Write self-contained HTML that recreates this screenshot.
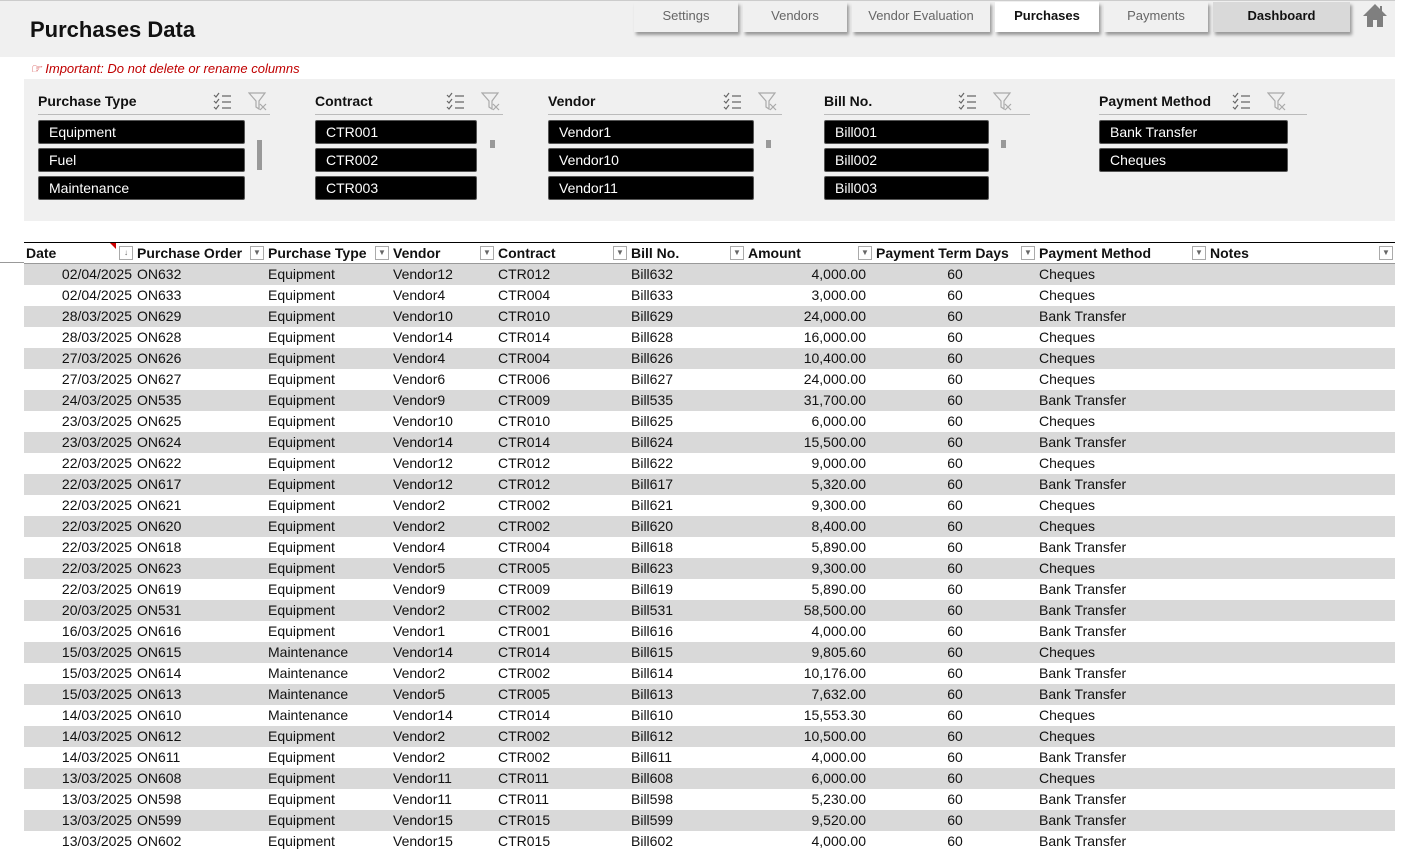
<!DOCTYPE html>
<html><head><meta charset="utf-8"><style>
*{margin:0;padding:0;box-sizing:border-box}
body{width:1412px;height:853px;overflow:hidden;background:#fff;font-family:"Liberation Sans",sans-serif;position:relative}
.top{position:absolute;left:0;top:0;width:1395px;height:57px;background:#f0f0f0;border-top:1px solid #ccc}
.title{position:absolute;left:30px;top:17px;font-size:22px;font-weight:bold;color:#111}
.tab{position:absolute;top:2px;height:30px;background:#f0f0f0;font-size:13px;color:#666;text-align:center;line-height:28px;box-shadow:2px 3px 3px #999}
.imp{position:absolute;left:30px;top:61px;font-size:13px;font-style:italic;color:#c00000}
.panel{position:absolute;left:24px;top:79px;width:1371px;height:142px;background:#f0f0f0}
.sl{position:absolute;top:0}
.sl .h{position:absolute;left:0;top:14px;font-size:14px;font-weight:bold;color:#111;white-space:nowrap}
.sl .ln{position:absolute;left:0;top:35px;height:1px;background:#bbb}
.btn{position:absolute;left:0;height:24px;background:#000;color:#fff;font-size:14px;line-height:22px;padding-left:10px;border-radius:2px;border:1px solid #555}
.sb{position:absolute;width:5px;background:#999}
table{position:absolute;left:24px;top:242px;border-collapse:collapse;table-layout:fixed;width:1371px;font-size:14px;color:#111}
th{height:21px;text-align:left;font-weight:bold;border-top:1px solid #000;border-bottom:1px solid #999;position:relative;padding-left:2px;white-space:nowrap}
th .dd{position:absolute;right:2px;top:3px;width:14px;height:14px;border:1px solid #aaa;background:#fff;font-size:8px;color:#666;text-align:center;line-height:12px}
td{height:21px;padding:0 3px 0 2px;white-space:nowrap;overflow:hidden}
tr:nth-child(odd) td{background:#d9d9d9}
.r{text-align:right}.c{text-align:center}
td.a{padding-right:8px}
</style></head><body>
<div class="top"></div>
<div class="title">Purchases Data</div>
<div class="tab" style="left:634px;width:104px">Settings</div>
<div class="tab" style="left:743px;width:104px">Vendors</div>
<div class="tab" style="left:852px;width:138px">Vendor Evaluation</div>
<div class="tab" style="left:995px;width:104px;background:#fff;color:#111;font-weight:bold">Purchases</div>
<div class="tab" style="left:1104px;width:104px">Payments</div>
<div class="tab" style="left:1213px;width:137px;background:#d9d9d9;color:#111;font-weight:bold">Dashboard</div>
<svg style="position:absolute;left:1362px;top:3px" width="26" height="25" viewBox="0 0 26 25"><path d="M13 1 L1 13 H5 V24 H11 V17 H15 V24 H21 V13 H25 L20 8 V3 H18 V6 Z" fill="#7f7f7f"/></svg>
<div class="imp">☞ Important: Do not delete or rename columns</div>
<div class="panel">
<div class="sl" style="left:14px"><div class="h">Purchase Type</div><div class="ln" style="width:232px"></div>
<div class="btn" style="top:41px;width:207px">Equipment</div><div class="btn" style="top:69px;width:207px">Fuel</div><div class="btn" style="top:97px;width:207px">Maintenance</div></div>
<div class="sb" style="left:233px;top:61px;height:30px"></div>
<div class="sl" style="left:291px"><div class="h">Contract</div><div class="ln" style="width:188px"></div>
<div class="btn" style="top:41px;width:162px">CTR001</div><div class="btn" style="top:69px;width:162px">CTR002</div><div class="btn" style="top:97px;width:162px">CTR003</div></div>
<div class="sb" style="left:466px;top:61px;height:8px"></div>
<div class="sl" style="left:524px"><div class="h">Vendor</div><div class="ln" style="width:234px"></div>
<div class="btn" style="top:41px;width:206px">Vendor1</div><div class="btn" style="top:69px;width:206px">Vendor10</div><div class="btn" style="top:97px;width:206px">Vendor11</div></div>
<div class="sb" style="left:742px;top:61px;height:8px"></div>
<div class="sl" style="left:800px"><div class="h">Bill No.</div><div class="ln" style="width:206px"></div>
<div class="btn" style="top:41px;width:165px">Bill001</div><div class="btn" style="top:69px;width:165px">Bill002</div><div class="btn" style="top:97px;width:165px">Bill003</div></div>
<div class="sb" style="left:977px;top:61px;height:8px"></div>
<div class="sl" style="left:1075px"><div class="h">Payment Method</div><div class="ln" style="width:208px"></div>
<div class="btn" style="top:41px;width:189px">Bank Transfer</div><div class="btn" style="top:69px;width:189px">Cheques</div></div>
</div>
<svg width="0" height="0" style="position:absolute"><defs>
<g id="ms" stroke="#666" fill="none" stroke-width="1.2"><path d="M1 3 l2 2 l3-4 M1 9 l2 2 l3-4 M1 15 l2 2 l3-4 M9 4 H18 M9 10 H18 M9 16 H18"/></g>
<g id="cf" stroke="#aaa" fill="none" stroke-width="1.2"><path d="M1 1 H17 L11 9 V17 L8 15 V9 Z M12 12 l6 6 M18 12 l-6 6"/></g>
</defs></svg>
<svg style="position:absolute;left:213px;top:92px" width="20" height="20"><use href="#ms"/></svg>
<svg style="position:absolute;left:248px;top:92px" width="20" height="20"><use href="#cf"/></svg>
<svg style="position:absolute;left:446px;top:92px" width="20" height="20"><use href="#ms"/></svg>
<svg style="position:absolute;left:481px;top:92px" width="20" height="20"><use href="#cf"/></svg>
<svg style="position:absolute;left:723px;top:92px" width="20" height="20"><use href="#ms"/></svg>
<svg style="position:absolute;left:758px;top:92px" width="20" height="20"><use href="#cf"/></svg>
<svg style="position:absolute;left:958px;top:92px" width="20" height="20"><use href="#ms"/></svg>
<svg style="position:absolute;left:993px;top:92px" width="20" height="20"><use href="#cf"/></svg>
<svg style="position:absolute;left:1232px;top:92px" width="20" height="20"><use href="#ms"/></svg>
<svg style="position:absolute;left:1267px;top:92px" width="20" height="20"><use href="#cf"/></svg>
<div style="position:absolute;left:0;top:262px;width:24px;height:1px;background:#999"></div>
<table>
<colgroup><col style="width:111px"><col style="width:131px"><col style="width:125px"><col style="width:105px"><col style="width:133px"><col style="width:117px"><col style="width:128px"><col style="width:163px"><col style="width:171px"><col style="width:187px"></colgroup>
<thead><tr>
<th>Date<span class="dd">↓</span><span style="position:absolute;left:86px;top:0;width:0;height:0;border-top:6px solid #c00;border-left:6px solid transparent"></span></th>
<th>Purchase Order<span class="dd">▼</span></th><th>Purchase Type<span class="dd">▼</span></th><th>Vendor<span class="dd">▼</span></th><th>Contract<span class="dd">▼</span></th><th>Bill No.<span class="dd">▼</span></th><th>Amount<span class="dd">▼</span></th><th>Payment Term Days<span class="dd">▼</span></th><th>Payment Method<span class="dd">▼</span></th><th>Notes<span class="dd">▼</span></th>
</tr></thead>
<tbody>
<tr><td class="r">02/04/2025</td><td>ON632</td><td>Equipment</td><td>Vendor12</td><td>CTR012</td><td>Bill632</td><td class="r a">4,000.00</td><td class="c">60</td><td>Cheques</td><td></td></tr>
<tr><td class="r">02/04/2025</td><td>ON633</td><td>Equipment</td><td>Vendor4</td><td>CTR004</td><td>Bill633</td><td class="r a">3,000.00</td><td class="c">60</td><td>Cheques</td><td></td></tr>
<tr><td class="r">28/03/2025</td><td>ON629</td><td>Equipment</td><td>Vendor10</td><td>CTR010</td><td>Bill629</td><td class="r a">24,000.00</td><td class="c">60</td><td>Bank Transfer</td><td></td></tr>
<tr><td class="r">28/03/2025</td><td>ON628</td><td>Equipment</td><td>Vendor14</td><td>CTR014</td><td>Bill628</td><td class="r a">16,000.00</td><td class="c">60</td><td>Cheques</td><td></td></tr>
<tr><td class="r">27/03/2025</td><td>ON626</td><td>Equipment</td><td>Vendor4</td><td>CTR004</td><td>Bill626</td><td class="r a">10,400.00</td><td class="c">60</td><td>Cheques</td><td></td></tr>
<tr><td class="r">27/03/2025</td><td>ON627</td><td>Equipment</td><td>Vendor6</td><td>CTR006</td><td>Bill627</td><td class="r a">24,000.00</td><td class="c">60</td><td>Cheques</td><td></td></tr>
<tr><td class="r">24/03/2025</td><td>ON535</td><td>Equipment</td><td>Vendor9</td><td>CTR009</td><td>Bill535</td><td class="r a">31,700.00</td><td class="c">60</td><td>Bank Transfer</td><td></td></tr>
<tr><td class="r">23/03/2025</td><td>ON625</td><td>Equipment</td><td>Vendor10</td><td>CTR010</td><td>Bill625</td><td class="r a">6,000.00</td><td class="c">60</td><td>Cheques</td><td></td></tr>
<tr><td class="r">23/03/2025</td><td>ON624</td><td>Equipment</td><td>Vendor14</td><td>CTR014</td><td>Bill624</td><td class="r a">15,500.00</td><td class="c">60</td><td>Bank Transfer</td><td></td></tr>
<tr><td class="r">22/03/2025</td><td>ON622</td><td>Equipment</td><td>Vendor12</td><td>CTR012</td><td>Bill622</td><td class="r a">9,000.00</td><td class="c">60</td><td>Cheques</td><td></td></tr>
<tr><td class="r">22/03/2025</td><td>ON617</td><td>Equipment</td><td>Vendor12</td><td>CTR012</td><td>Bill617</td><td class="r a">5,320.00</td><td class="c">60</td><td>Bank Transfer</td><td></td></tr>
<tr><td class="r">22/03/2025</td><td>ON621</td><td>Equipment</td><td>Vendor2</td><td>CTR002</td><td>Bill621</td><td class="r a">9,300.00</td><td class="c">60</td><td>Cheques</td><td></td></tr>
<tr><td class="r">22/03/2025</td><td>ON620</td><td>Equipment</td><td>Vendor2</td><td>CTR002</td><td>Bill620</td><td class="r a">8,400.00</td><td class="c">60</td><td>Cheques</td><td></td></tr>
<tr><td class="r">22/03/2025</td><td>ON618</td><td>Equipment</td><td>Vendor4</td><td>CTR004</td><td>Bill618</td><td class="r a">5,890.00</td><td class="c">60</td><td>Bank Transfer</td><td></td></tr>
<tr><td class="r">22/03/2025</td><td>ON623</td><td>Equipment</td><td>Vendor5</td><td>CTR005</td><td>Bill623</td><td class="r a">9,300.00</td><td class="c">60</td><td>Cheques</td><td></td></tr>
<tr><td class="r">22/03/2025</td><td>ON619</td><td>Equipment</td><td>Vendor9</td><td>CTR009</td><td>Bill619</td><td class="r a">5,890.00</td><td class="c">60</td><td>Bank Transfer</td><td></td></tr>
<tr><td class="r">20/03/2025</td><td>ON531</td><td>Equipment</td><td>Vendor2</td><td>CTR002</td><td>Bill531</td><td class="r a">58,500.00</td><td class="c">60</td><td>Bank Transfer</td><td></td></tr>
<tr><td class="r">16/03/2025</td><td>ON616</td><td>Equipment</td><td>Vendor1</td><td>CTR001</td><td>Bill616</td><td class="r a">4,000.00</td><td class="c">60</td><td>Bank Transfer</td><td></td></tr>
<tr><td class="r">15/03/2025</td><td>ON615</td><td>Maintenance</td><td>Vendor14</td><td>CTR014</td><td>Bill615</td><td class="r a">9,805.60</td><td class="c">60</td><td>Cheques</td><td></td></tr>
<tr><td class="r">15/03/2025</td><td>ON614</td><td>Maintenance</td><td>Vendor2</td><td>CTR002</td><td>Bill614</td><td class="r a">10,176.00</td><td class="c">60</td><td>Bank Transfer</td><td></td></tr>
<tr><td class="r">15/03/2025</td><td>ON613</td><td>Maintenance</td><td>Vendor5</td><td>CTR005</td><td>Bill613</td><td class="r a">7,632.00</td><td class="c">60</td><td>Bank Transfer</td><td></td></tr>
<tr><td class="r">14/03/2025</td><td>ON610</td><td>Maintenance</td><td>Vendor14</td><td>CTR014</td><td>Bill610</td><td class="r a">15,553.30</td><td class="c">60</td><td>Cheques</td><td></td></tr>
<tr><td class="r">14/03/2025</td><td>ON612</td><td>Equipment</td><td>Vendor2</td><td>CTR002</td><td>Bill612</td><td class="r a">10,500.00</td><td class="c">60</td><td>Cheques</td><td></td></tr>
<tr><td class="r">14/03/2025</td><td>ON611</td><td>Equipment</td><td>Vendor2</td><td>CTR002</td><td>Bill611</td><td class="r a">4,000.00</td><td class="c">60</td><td>Bank Transfer</td><td></td></tr>
<tr><td class="r">13/03/2025</td><td>ON608</td><td>Equipment</td><td>Vendor11</td><td>CTR011</td><td>Bill608</td><td class="r a">6,000.00</td><td class="c">60</td><td>Cheques</td><td></td></tr>
<tr><td class="r">13/03/2025</td><td>ON598</td><td>Equipment</td><td>Vendor11</td><td>CTR011</td><td>Bill598</td><td class="r a">5,230.00</td><td class="c">60</td><td>Bank Transfer</td><td></td></tr>
<tr><td class="r">13/03/2025</td><td>ON599</td><td>Equipment</td><td>Vendor15</td><td>CTR015</td><td>Bill599</td><td class="r a">9,520.00</td><td class="c">60</td><td>Bank Transfer</td><td></td></tr>
<tr><td class="r">13/03/2025</td><td>ON602</td><td>Equipment</td><td>Vendor15</td><td>CTR015</td><td>Bill602</td><td class="r a">4,000.00</td><td class="c">60</td><td>Bank Transfer</td><td></td></tr>
</tbody></table>
</body></html>
